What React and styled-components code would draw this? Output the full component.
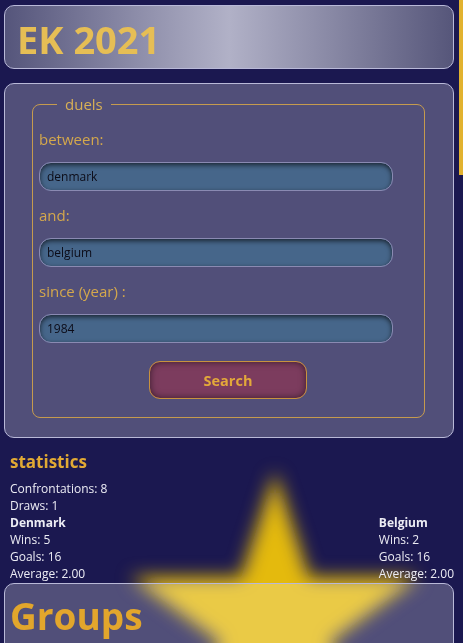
import React from 'react'
import styled, { createGlobalStyle } from 'styled-components'

const GlobalStyle = createGlobalStyle`
  html {
    background: #1b1850;
    scrollbar-width: none;
  }
  html::-webkit-scrollbar {
    display: none;
  }
  body {
    margin: 0;
    font-family: "Open Sans", "Noto Sans", sans-serif;
    color: #ececf4;
  }
`;

const StarLayer = styled.svg`
  position: fixed;
  left: 0;
  top: 0;
  width: 463px;
  height: 643px;
  z-index: 0;
  pointer-events: none;
`;

const ScrollThumb = styled.div`
  position: fixed;
  top: 0;
  right: 0;
  width: 4px;
  height: 175px;
  background: #e2b22e;
  z-index: 5;
`;

const Page = styled.div`
  position: relative;
  z-index: 1;
  padding: 5px 9px 20px 4px;
  display: flex;
  flex-direction: column;
`;

const Panel = styled.section`
  border: 1px solid #b9b9d8;
  border-radius: 10px;
  background: ${({ $gradient }) =>
    $gradient
      ? 'linear-gradient(to right, #55557b 0%, #8e8eaa 30%, #b1b1c7 50%, #8a8aa6 72%, #56567a 100%)'
      : 'rgba(255, 255, 255, 0.24)'};
  min-height: ${({ $minHeight }) => $minHeight || 'auto'};
  margin-bottom: ${({ $gap }) => $gap || '0'};
`;

const Title = styled.h1`
  margin: 0;
  padding: 8px 0 4px 12px;
  font-size: 38px;
  line-height: 50px;
  font-weight: 700;
  color: #e6be55;
`;

const FormWrap = styled.div`
  padding: 10px 28px 19px 27px;
`;

const Fieldset = styled.fieldset`
  margin: 0;
  border: 1px solid #c59b4e;
  border-radius: 8px;
  padding: 1px 7px 18px 6px;
`;

const Legend = styled.legend`
  margin-left: 18px;
  padding: 0 8px;
  font-size: 15px;
  line-height: 20px;
  color: #d8b055;
`;

const Label = styled.label`
  display: block;
  font-size: 15px;
  line-height: 20px;
  color: #d4a84c;
  margin: 14px 0 13px;
`;

const Input = styled.input`
  box-sizing: border-box;
  display: block;
  width: 354px;
  height: 29px;
  padding: 0 7px;
  border: 1px solid #8a8ab2;
  border-radius: 12px;
  background: #46668a;
  box-shadow: inset 0 2px 5px rgba(0, 0, 0, 0.65);
  font-family: "Open Sans", "Noto Sans", sans-serif;
  font-size: 12px;
  color: #0c0c18;
  outline: none;
`;

const ButtonRow = styled.div`
  display: flex;
  justify-content: center;
  padding-top: 18px;
`;

const SearchButton = styled.button`
  width: 158px;
  height: 38px;
  border: 1px solid #c8923e;
  border-radius: 11px;
  background: #7c3c5e;
  box-shadow: inset 0 0 7px rgba(0, 0, 0, 0.55);
  font-family: "Open Sans", "Noto Sans", sans-serif;
  font-size: 14.5px;
  font-weight: 700;
  color: #e3a83a;
`;

const Stats = styled.section`
  padding: 12px 0 1px 6px;
`;

const StatsTitle = styled.h2`
  margin: 0 0 6px;
  font-size: 17px;
  line-height: 24px;
  font-weight: 700;
  color: #e1a934;
`;

const Line = styled.div`
  font-size: 12px;
  line-height: 17px;
  font-weight: ${({ $bold }) => ($bold ? 700 : 400)};
  color: #ececf4;
`;

const Teams = styled.div`
  display: flex;
  justify-content: space-between;
`;

const Team = styled.div`
  display: flex;
  flex-direction: column;
`;

const GroupsTitle = styled.h2`
  margin: 0;
  padding: 7px 0 0 5px;
  font-size: 37px;
  line-height: 50px;
  font-weight: 700;
  color: #e2a62c;
`;

const starPoints = (() => {
  const cx = 275
  const cy = 624
  const R = 152
  const r = 58
  const pts = []
  for (let i = 0; i < 10; i++) {
    const a = (Math.PI / 5) * i - Math.PI / 2
    const rad = i % 2 === 0 ? R : r
    pts.push(`${(cx + rad * Math.cos(a)).toFixed(1)},${(cy + rad * Math.sin(a)).toFixed(1)}`)
  }
  return pts.join(' ')
})()

const teams = [
  { name: 'Denmark', wins: 5, goals: 16, average: '2.00' },
  { name: 'Belgium', wins: 2, goals: 16, average: '2.00' },
]

const App = () => {
  return (
    <>
      <GlobalStyle />
      <StarLayer viewBox="0 0 463 643">
        <defs>
          <filter id="soft" x="-20%" y="-20%" width="140%" height="140%">
            <feGaussianBlur stdDeviation="9" />
          </filter>
        </defs>
        <polygon points={starPoints} fill="#e4ba08" filter="url(#soft)" />
      </StarLayer>
      <ScrollThumb />
      <Page>
        <Panel $gradient $gap="14px">
          <Title>EK 2021</Title>
        </Panel>

        <Panel>
          <FormWrap>
            <Fieldset>
              <Legend>duels</Legend>
              <Label>between:</Label>
              <Input defaultValue="denmark" />
              <Label>and:</Label>
              <Input defaultValue="belgium" />
              <Label>since (year) :</Label>
              <Input defaultValue="1984" />
              <ButtonRow>
                <SearchButton>Search</SearchButton>
              </ButtonRow>
            </Fieldset>
          </FormWrap>
        </Panel>

        <Stats>
          <StatsTitle>statistics</StatsTitle>
          <Line>Confrontations: 8</Line>
          <Line>Draws: 1</Line>
          <Teams>
            {teams.map((t) => (
              <Team key={t.name}>
                <Line $bold>{t.name}</Line>
                <Line>Wins: {t.wins}</Line>
                <Line>Goals: {t.goals}</Line>
                <Line>Average: {t.average}</Line>
              </Team>
            ))}
          </Teams>
        </Stats>

        <Panel $minHeight="1760px">
          <GroupsTitle>Groups</GroupsTitle>
        </Panel>
      </Page>
    </>
  )
}

export default App
